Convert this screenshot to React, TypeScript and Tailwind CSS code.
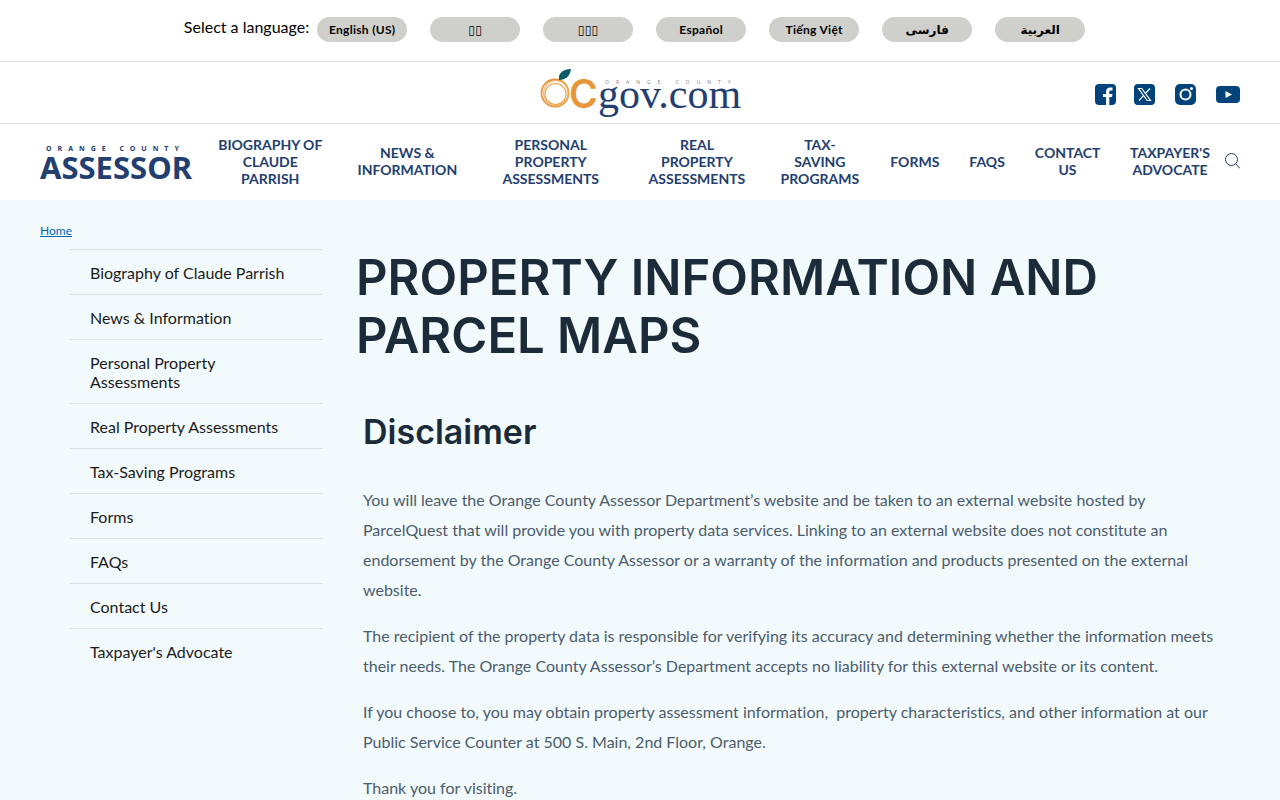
import { FC } from "react";

const languages = [
  "English (US)",
  "▯▯",
  "▯▯▯",
  "Español",
  "Tiếng Việt",
  "فارسی",
  "العربية",
];

const navItems = [
  "Biography of Claude Parrish",
  "News & Information",
  "Personal Property Assessments",
  "Real Property Assessments",
  "Tax-Saving Programs",
  "Forms",
  "FAQs",
  "Contact Us",
  "Taxpayer's Advocate",
];

const LanguageBar: FC = () => {
  return (
    <div className="border-b border-[#dfe1e2] pt-[17px] pb-[19px] pr-[11px] flex justify-center">
      <p className="text-base leading-5 text-black mr-2">
        Select a language:
      </p>
      <div className="flex gap-[23px]">
        {languages.map((language) => (
          <button
            key={language}
            type="button"
            className="w-[90px] h-[25px] rounded-full bg-[#cfcfcc] text-xs font-bold tracking-[0.3px] text-black"
          >
            {language}
          </button>
        ))}
      </div>
    </div>
  );
};

const CountyLogo: FC = () => {
  return (
    <svg width="202" height="50" viewBox="0 0 202 50" className="overflow-visible" aria-label="OCgov.com">
      <circle cx="16" cy="25" r="13.500" fill="none" stroke="#e8963a" strokeWidth="1.800" />
      <circle cx="16.500" cy="26" r="10.500" fill="none" stroke="#efa04a" strokeWidth="1.200" />
      <circle cx="17" cy="25" r="12.500" fill="none" stroke="#f2ac60" strokeWidth="1" />
      <path d="M20 12C19 5 24 1 32 1C31 8 27 12 20 12Z" fill="#0b5c66" />
      <text x="30" y="40" fontSize="39" fontWeight="600" fill="#e8963a" fontFamily="Inter, sans-serif">
        C
      </text>
      <text x="66" y="16" fontSize="5" letterSpacing="7" fill="#7d7f83" fontFamily="Open Sans, sans-serif">
        ORANGE COUNTY
      </text>
      <text x="59" y="40" fontSize="42" fill="#233e70" fontFamily="Liberation Serif, serif">
        gov.com
      </text>
    </svg>
  );
};

const SocialLinks: FC = () => {
  return (
    <div className="flex items-center">
      <a href="#facebook" aria-label="Facebook">
        <svg width="21" height="21" viewBox="0 0 21 21">
          <rect width="21" height="21" rx="4" fill="#00437b" />
          <path
            d="M11 21V13H8V10H11V8C11 5 12.500 3.500 15 3.500H17.500V6.500H15.800C14.800 6.500 14.300 7 14.300 8V10H17.500L17 13H14.300V21Z"
            fill="#fff"
          />
        </svg>
      </a>
      <a href="#x" aria-label="X" className="ml-[18px]">
        <svg width="21" height="21" viewBox="0 0 21 21">
          <rect width="21" height="21" rx="4" fill="#00437b" />
          <path
            d="M4.500 4.500H7.800L16.500 16.500H13.200ZM16 4.500L11.300 9.600M9.500 11.600L5 16.500"
            fill="none"
            stroke="#fff"
            strokeWidth="1.200"
          />
        </svg>
      </a>
      <a href="#instagram" aria-label="Instagram" className="ml-5">
        <svg width="21" height="21" viewBox="0 0 21 21">
          <rect width="21" height="21" rx="5" fill="#00437b" />
          <circle cx="10.500" cy="10.500" r="5" fill="none" stroke="#fff" strokeWidth="2" />
          <circle cx="16.500" cy="4.500" r="1.500" fill="#fff" />
        </svg>
      </a>
      <a href="#youtube" aria-label="YouTube" className="ml-5">
        <svg width="24" height="17" viewBox="0 0 24 17">
          <rect width="24" height="17" rx="4" fill="#00437b" />
          <path d="M9.500 5L16 8.500L9.500 12Z" fill="#fff" />
        </svg>
      </a>
    </div>
  );
};

const MainNav: FC = () => {
  return (
    <div className="h-[76px] px-10 pb-0.5 flex items-center">
      <a href="#home" className="shrink-0">
        <svg width="152" height="40" viewBox="0 0 152 40" className="overflow-visible" aria-label="Orange County Assessor">
          <text x="6" y="10" fontSize="7" fontWeight="700" letterSpacing="6" fill="#233e70" fontFamily="Noto Sans, sans-serif">
            ORANGE COUNTY
          </text>
          <text x="0" y="38" fontSize="31" fontWeight="700" fill="#233e70" fontFamily="Noto Sans, sans-serif">
            ASSESSOR
          </text>
        </svg>
      </a>
      <nav className="flex-1 min-w-0 ml-1.5">
        <ul className="flex items-center">
          {navItems.map((item) => (
            <li key={item}>
              <a
                href="#nav"
                className="block px-[15px] text-center text-sm leading-[17px] font-bold uppercase text-[#233e70]"
              >
                {item}
              </a>
            </li>
          ))}
        </ul>
      </nav>
      <button type="button" aria-label="Search" className="shrink-0">
        <svg width="15" height="16" viewBox="0 0 15 16" fill="none" stroke="#233e70">
          <circle cx="6.500" cy="6.500" r="6" />
          <path d="M11 11L15 15.500" />
        </svg>
      </button>
    </div>
  );
};

const Sidebar: FC = () => {
  return (
    <ul className="w-[253px] shrink-0 ml-[30px]">
      {navItems.map((item) => (
        <li key={item} className="border-t border-[#dfe1e2]">
          <a
            href="#side"
            className="block px-5 pt-[13px] pb-3 text-base leading-[19px] text-[#1b1b1b]"
          >
            {item}
          </a>
        </li>
      ))}
    </ul>
  );
};

const App: FC = () => {
  return (
    <div className="min-h-screen bg-[#f2fafc] font-[Lato,'DejaVu_Sans',sans-serif] [font-variant-ligatures:none]">
      <header className="bg-white">
        <LanguageBar />
        <div className="h-[62px] border-b border-[#dfe1e2] px-10 grid grid-cols-[1fr_auto_1fr] items-center">
          <a href="#county" className="col-start-2">
            <CountyLogo />
          </a>
          <div className="justify-self-end pt-1">
            <SocialLinks />
          </div>
        </div>
        <MainNav />
      </header>
      <div className="px-10 pt-[22px]">
        <a href="#home" className="block w-fit text-xs leading-[18px] text-[#0067b1] underline">
          Home
        </a>
        <div className="flex mt-[9px]">
          <Sidebar />
          <main className="flex-1 min-w-0 ml-[33px]">
            <h1 className="text-[49px] leading-[58px] font-semibold text-[#1c2b39] font-[Inter,sans-serif]">
              PROPERTY INFORMATION AND PARCEL MAPS
            </h1>
            <div className="pl-[7px] pr-6 text-base leading-[30px] text-[#4c5c6d]">
              <h2 className="mt-[47px] mb-[33px] text-[34px] leading-[40px] font-semibold text-[#1c2b39] font-[Inter,sans-serif]">
                Disclaimer
              </h2>
              <p className="mb-4">
                You will leave the Orange County Assessor Department’s website
                and be taken to an external website hosted by ParcelQuest that
                will provide you with property data services. Linking to an
                external website does not constitute an endorsement by the
                Orange County Assessor or a warranty of the information and
                products presented on the external website.
              </p>
              <p className="mb-4">
                The recipient of the property data is responsible for verifying
                its accuracy and determining whether the information meets their
                needs. The Orange County Assessor’s Department accepts no
                liability for this external website or its content.
              </p>
              <p className="mb-4">
                If you choose to, you may obtain property assessment
                information,&nbsp; property characteristics, and other
                information at our Public Service Counter at 500 S. Main, 2nd
                Floor, Orange.
              </p>
              <p>Thank you for visiting.</p>
            </div>
          </main>
        </div>
      </div>
    </div>
  );
};

export default App;
